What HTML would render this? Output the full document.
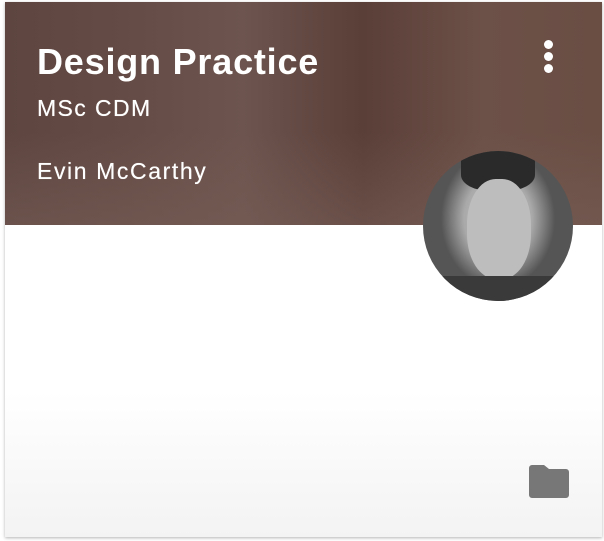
<!DOCTYPE html>
<html><head><style>
body{margin:0;width:604px;height:541px;background:#fff;overflow:hidden;font-family:"Liberation Sans",sans-serif}
.card{position:absolute;left:5px;top:2px;width:597px;height:535px;background:linear-gradient(#fff 0,#fff 390px,#f3f3f3 535px);box-shadow:0 1px 3px rgba(0,0,0,.3)}
.hdr{position:absolute;left:0;top:0;width:597px;height:223px;background:linear-gradient(90deg,#5e4540 0%,#654b45 20%,#6d544e 40%,#5a3e38 60%,#6c5148 80%,#6a4e44 100%)}
.hdr:after{content:"";position:absolute;left:0;right:0;top:130px;bottom:0;background:linear-gradient(rgba(110,90,84,0),rgba(120,96,88,.5))}
.t{position:absolute;color:#fff;font-weight:bold;z-index:2}
.dots{position:absolute;left:544px;top:40px;z-index:2}
.dots i{display:block;width:9px;height:9px;border-radius:50%;background:#fff;margin-bottom:3px}
.av{position:absolute;left:423px;top:151px;width:150px;height:150px;border-radius:50%;background:radial-gradient(ellipse 38% 46% at 50% 45%,#c8c8c8 0%,#a9a9a9 60%,#555 100%),#4a4a4a;z-index:3;overflow:hidden}
</style></head><body>
<div class="card"><div class="hdr"></div></div>
<div class="t" style="left:37px;top:41px;font-size:36px;letter-spacing:0.8px">Design Practice</div>
<div class="t" style="left:37px;top:95px;font-size:23px;font-weight:normal;letter-spacing:1.4px;text-shadow:0 0 0.5px #fff">MSc CDM</div>
<div class="t" style="left:37px;top:158px;font-size:23px;font-weight:normal;letter-spacing:1.6px;text-shadow:0 0 0.5px #fff">Evin McCarthy</div>
<div class="dots"><i></i><i></i><i></i></div>
<div class="av">
<div style="position:absolute;left:38px;top:0;width:74px;height:40px;background:#2a2a2a;border-radius:0 0 40% 40%"></div>
<div style="position:absolute;left:44px;top:28px;width:64px;height:100px;background:#bdbdbd;border-radius:45%"></div>
<div style="position:absolute;left:0;top:125px;width:150px;height:30px;background:#3a3a3a"></div>
</div>
<svg style="position:absolute;left:529px;top:465px" width="40" height="33" viewBox="0 0 40 33"><path d="M3 0h12l5 4h17a3 3 0 0 1 3 3v23a3 3 0 0 1-3 3H3a3 3 0 0 1-3-3V3a3 3 0 0 1 3-3z" fill="#777"/></svg>
</body></html>
